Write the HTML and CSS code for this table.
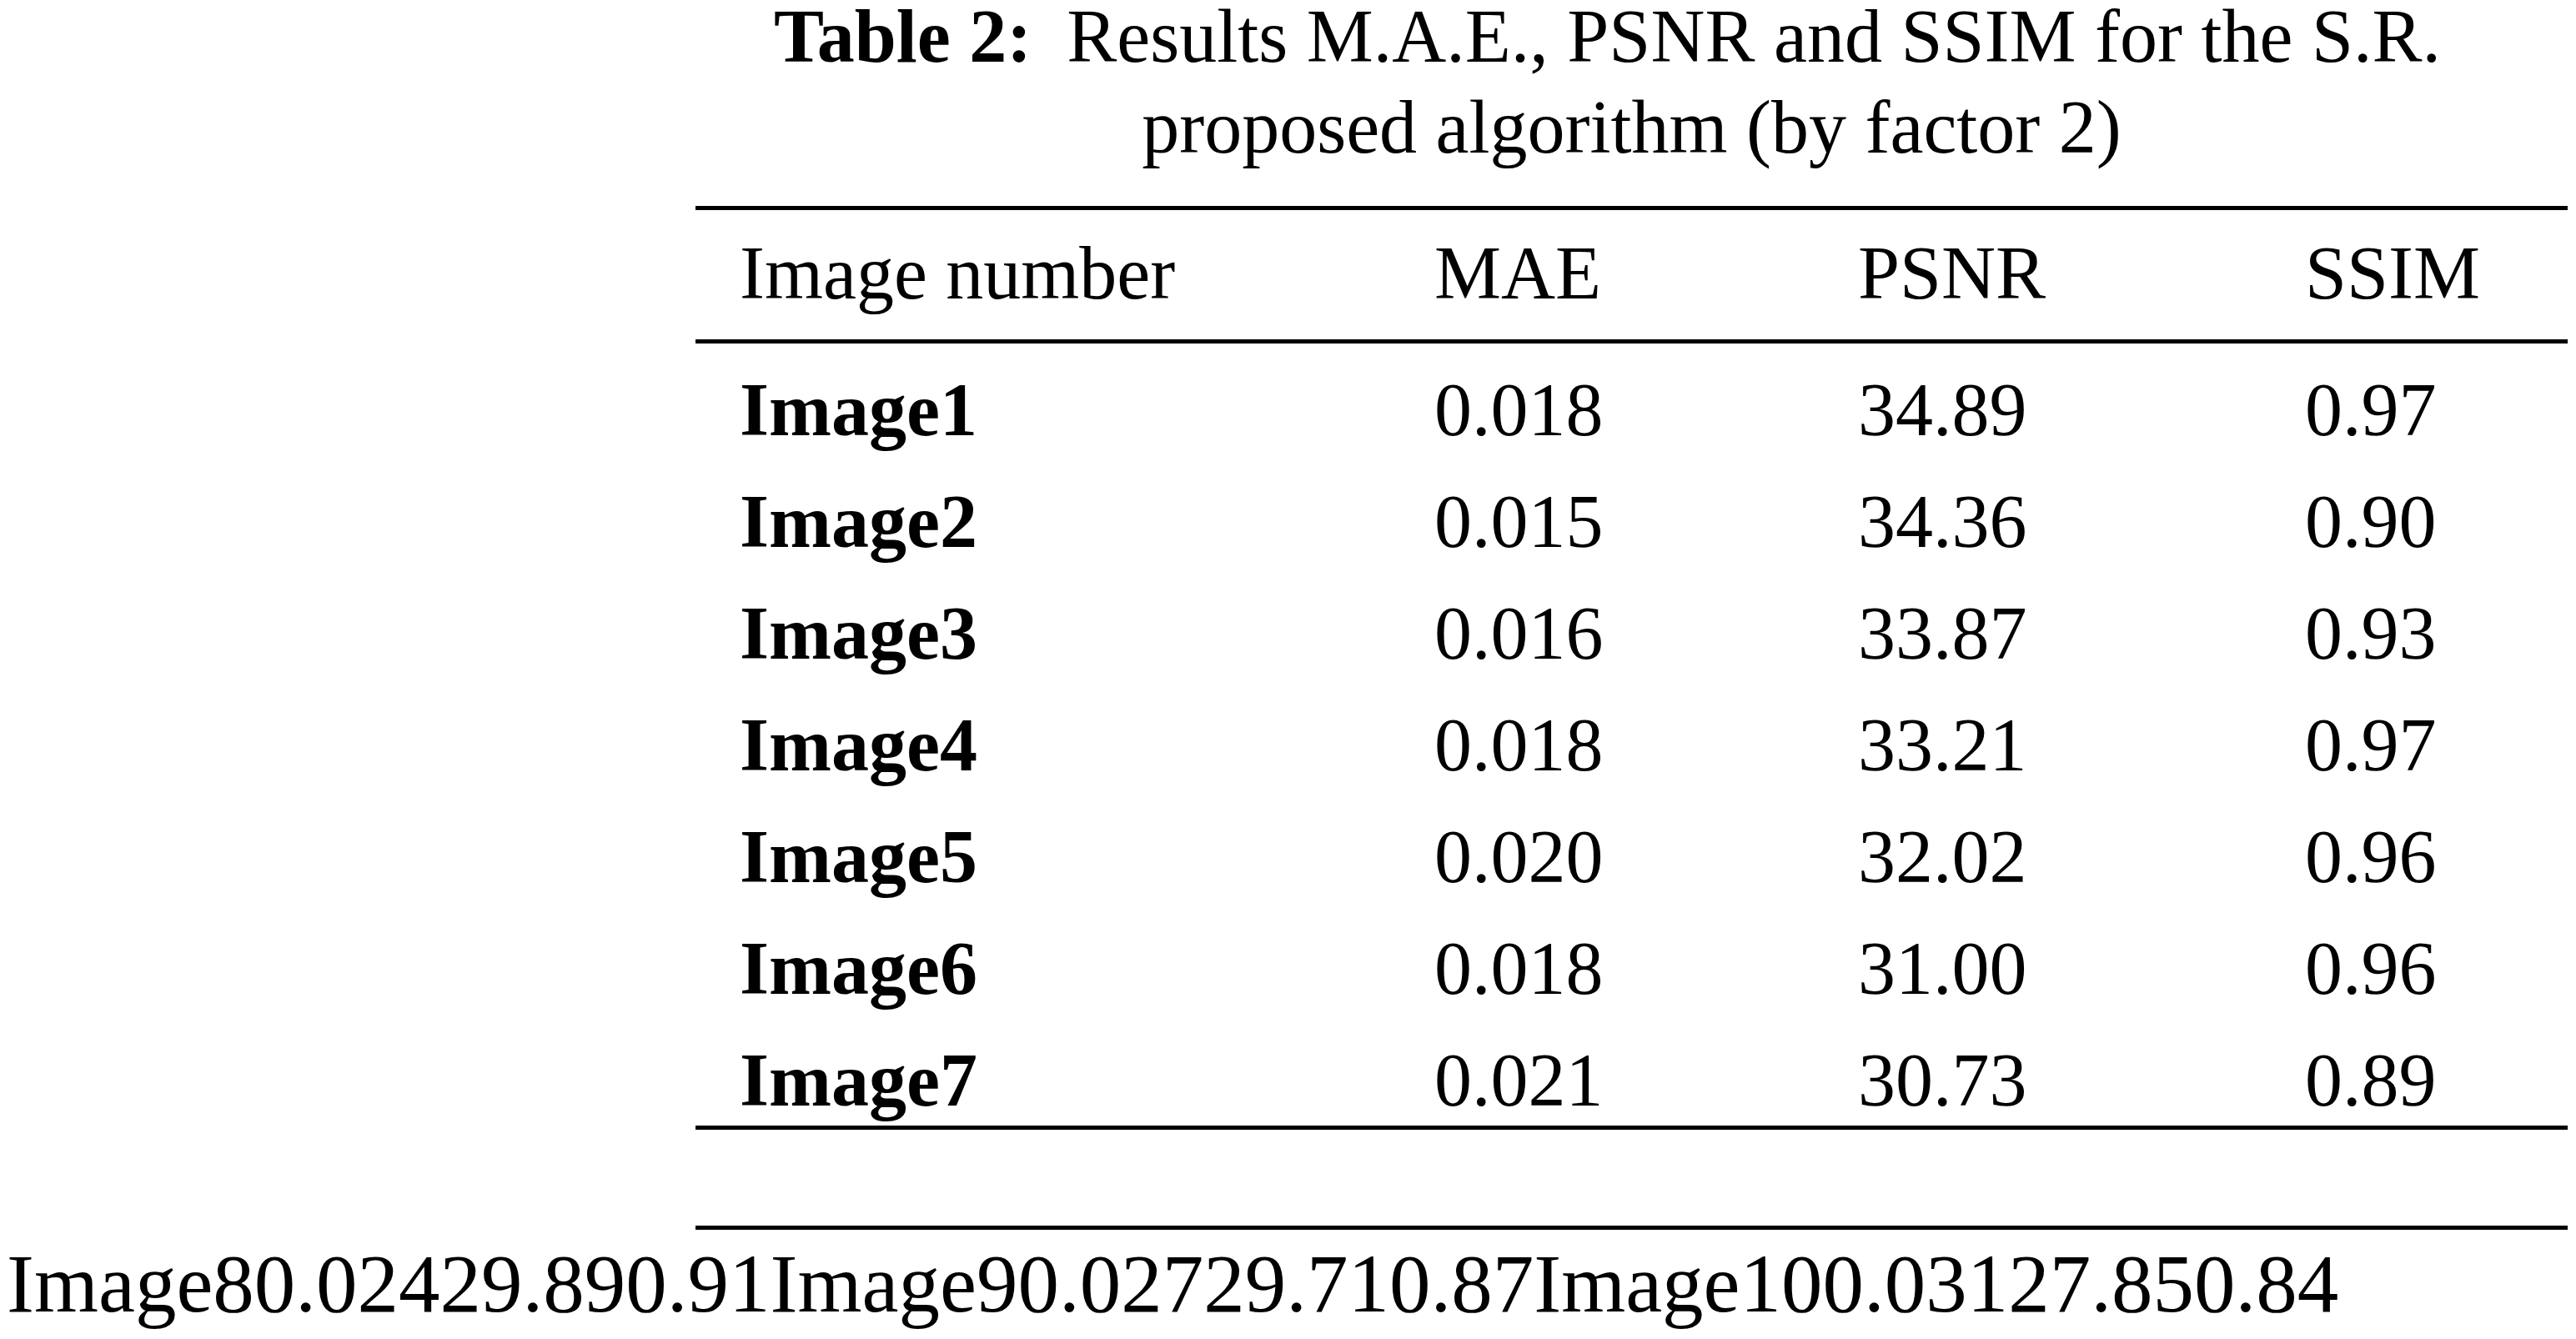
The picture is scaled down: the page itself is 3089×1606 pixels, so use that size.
FILE: index.html
```html
<!DOCTYPE html>
<html>

<head>
  <title>Table 2</title>
  <link rel="stylesheet" href="styles.css">
</head>

<body>
  <div class="table-wrap">
    <div class="caption">
      <span class="caption-label">Table 2:</span>Results M.A.E., PSNR and SSIM for the S.R.<br>
      proposed algorithm (by factor 2)
    </div>
    <table class="results">
      <colgroup>
        <col class="col-name">
        <col class="col-mae">
        <col class="col-psnr">
        <col class="col-ssim">
      </colgroup>
      <thead>
        <tr>
          <th>Image number</th>
          <th>MAE</th>
          <th>PSNR</th>
          <th>SSIM</th>
        </tr>
      </thead>
      <tbody>
        <tr><td class="name">Image1</td><td>0.018</td><td>34.89</td><td>0.97</td></tr>
        <tr><td class="name">Image2</td><td>0.015</td><td>34.36</td><td>0.90</td></tr>
        <tr><td class="name">Image3</td><td>0.016</td><td>33.87</td><td>0.93</td></tr>
        <tr><td class="name">Image4</td><td>0.018</td><td>33.21</td><td>0.97</td></tr>
        <tr><td class="name">Image5</td><td>0.020</td><td>32.02</td><td>0.96</td></tr>
        <tr><td class="name">Image6</td><td>0.018</td><td>31.00</td><td>0.96</td></tr>
        <tr><td class="name">Image7</td><td>0.021</td><td>30.73</td><td>0.89</td></tr>
      </tbody>
    </table>
    <div class="table-gap"></div>
  </div>

  <div class="leftover">Image80.02429.890.91Image90.02729.710.87Image100.03127.850.84</div>
</body>

</html>
```

FILE: styles.css
```css
body {
  margin: 0 8px;
  font-family: "Liberation Serif", "Times New Roman", serif;
  color: #000;
  background-color: #fff;
}

.table-wrap {
  margin-left: 826px;
  width: 2245px;
}

.caption {
  font-size: 90px;
  line-height: 109px;
  text-align: center;
  text-indent: -58px;
  margin: -11px 0 40px 0;
}

.caption-label {
  font-weight: bold;
  margin-right: 42px;
}

.results {
  width: 100%;
  table-layout: fixed;
  border-collapse: collapse;
  border-top: 5px solid #000;
  border-bottom: 5px solid #000;
  font-size: 90px;
  line-height: 104px;
}

.col-name {
  width: 833px;
}

.col-mae {
  width: 508px;
}

.col-psnr {
  width: 536px;
}

.col-ssim {
  width: 368px;
}

.results th {
  font-weight: normal;
  text-align: left;
  padding: 24px 0 27px 53px;
  border-bottom: 5px solid #000;
}

.results td {
  text-align: left;
  padding: 28px 0 2px 53px;
}

.results td.name {
  font-weight: bold;
}

.table-gap {
  height: 115px;
  border-bottom: 5px solid #000;
}

.leftover {
  font-size: 99px;
  line-height: 114px;
  margin-top: 8px;
  white-space: nowrap;
}
```
